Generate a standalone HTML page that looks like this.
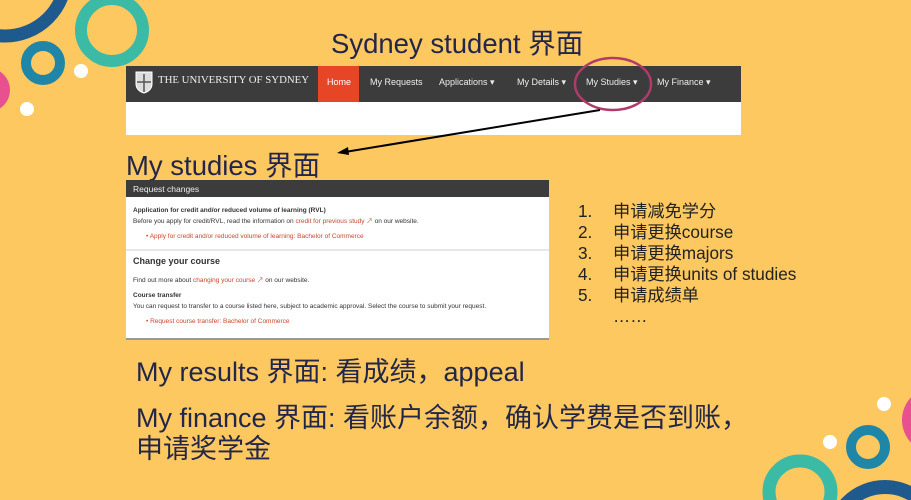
<!DOCTYPE html>
<html><head><meta charset="utf-8"><style>
*{margin:0;padding:0;box-sizing:border-box}
html,body{width:911px;height:500px;overflow:hidden}
body{background:#fdc85f;position:relative;font-family:"Liberation Sans","Noto Sans CJK SC",sans-serif;color:#1e1e2e}
.a{position:absolute;white-space:nowrap}
svg.bg{position:absolute;left:0;top:0}
.nav{position:absolute;left:126px;top:66px;width:615px;height:36px;background:#3c3c3c}
.nav span{position:absolute;top:11px;font-size:9px;color:#eee;white-space:nowrap}
.wh{position:absolute;left:126px;top:102px;width:615px;height:33px;background:#fff}
.panel{position:absolute;left:126px;top:180px;width:423px;height:160px;background:#fff;font-size:6.5px;color:#333;overflow:hidden}
.ph{height:17px;background:#3c3c3c;color:#eee;font-size:8.5px;padding:4px 7px}
.red{color:#c8452f}
.list{position:absolute;left:578px;top:201px;font-size:17.2px;line-height:21px;color:#222}
.list div span{display:inline-block;width:35px}
</style></head><body>
<svg class="bg" width="911" height="500">
<circle cx="5" cy="-25" r="61" fill="none" stroke="#1f5a8e" stroke-width="13"/>
<circle cx="112" cy="30" r="31" fill="none" stroke="#3bbaa6" stroke-width="12"/>
<circle cx="43" cy="63" r="17" fill="none" stroke="#1f86a8" stroke-width="10"/>
<circle cx="81" cy="71" r="7" fill="#fff"/>
<circle cx="27" cy="109" r="7" fill="#fff"/>
<circle cx="-12" cy="90" r="22" fill="#e9508f"/>
<circle cx="884" cy="404" r="7" fill="#fff"/>
<circle cx="830" cy="442" r="7" fill="#fff"/>
<circle cx="868" cy="447" r="17" fill="none" stroke="#1f86a8" stroke-width="10"/>
<circle cx="800" cy="492" r="31" fill="none" stroke="#3bbaa6" stroke-width="13"/>
<circle cx="935" cy="420" r="33" fill="#e9508f"/>
<circle cx="885" cy="540" r="53" fill="none" stroke="#1f5a8e" stroke-width="14"/>
</svg>
<div class="a" style="left:331px;top:21px;font-size:27.5px;color:#22264a">Sydney student 界面</div>
<div class="nav">
<svg style="position:absolute;left:8px;top:4px" width="20" height="24"><path d="M2 2h16v12c0 5-4 8-8 9c-4-1-8-4-8-9z" fill="#ddd" stroke="#fff"/><path d="M10 4v18M3 12h14" stroke="#555" stroke-width="1.5"/></svg>
<span style="left:32px;top:8px;font-family:'Liberation Serif',serif;font-size:10.8px;color:#eee">THE UNIVERSITY OF SYDNEY</span>
<div style="position:absolute;left:192px;top:0;width:41px;height:36px;background:#e64626"></div>
<span style="left:201px;color:#fff">Home</span>
<span style="left:244px">My Requests</span>
<span style="left:313px">Applications ▾</span>
<span style="left:391px">My Details ▾</span>
<span style="left:460px">My Studies ▾</span>
<span style="left:531px">My Finance ▾</span>
</div>
<div class="wh"></div>
<svg class="bg" width="911" height="500">
<ellipse cx="613" cy="84" rx="38" ry="26" fill="none" stroke="#b03a6a" stroke-width="2.5"/>
<line x1="600" y1="110" x2="345" y2="152" stroke="#000" stroke-width="2"/>
<path d="M337 153l11-6l1 8z" fill="#000"/>
</svg>
<div class="a" style="left:126px;top:143px;font-size:27.5px;color:#22264a">My studies 界面</div>
<div class="panel">
<div class="ph">Request changes</div>
<div style="padding:8px 7px 0;line-height:11px"><b>Application for credit and/or reduced volume of learning (RVL)</b><br>Before you apply for credit/RVL, read the information on <span class="red">credit for previous study ↗</span> on our website.</div>
<div style="padding:6px 0 0 20px" class="red">• Apply for credit and/or reduced volume of learning: Bachelor of Commerce</div>
<div style="height:2px;background:#e8e8e8;margin-top:9px"></div>
<div style="padding:5px 7px 0;font-size:9px;font-weight:bold;color:#333">Change your course</div>
<div style="padding:8px 7px 0">Find out more about <span class="red">changing your course ↗</span> on our website.</div>
<div style="padding:6px 7px 0;line-height:11px"><b>Course transfer</b><br>You can request to transfer to a course listed here, subject to academic approval. Select the course to submit your request.</div>
<div style="padding:6px 0 0 20px" class="red">• Request course transfer: Bachelor of Commerce</div>
<div style="position:absolute;left:0;right:0;bottom:0;height:2px;background:#999"></div>
</div>
<div class="list">
<div><span>1.</span>申请减免学分</div>
<div><span>2.</span>申请更换course</div>
<div><span>3.</span>申请更换majors</div>
<div><span>4.</span>申请更换units of studies</div>
<div><span>5.</span>申请成绩单</div>
<div><span></span>……</div>
</div>
<div class="a" style="left:136px;top:350px;font-size:27px;color:#22264a">My results 界面: 看成绩，appeal</div>
<div class="a" style="left:136px;top:396px;font-size:27px;color:#22264a">My finance 界面: 看账户余额，确认学费是否到账，</div>
<div class="a" style="left:136px;top:427px;font-size:27px;color:#22264a">申请奖学金</div>
</body></html>
